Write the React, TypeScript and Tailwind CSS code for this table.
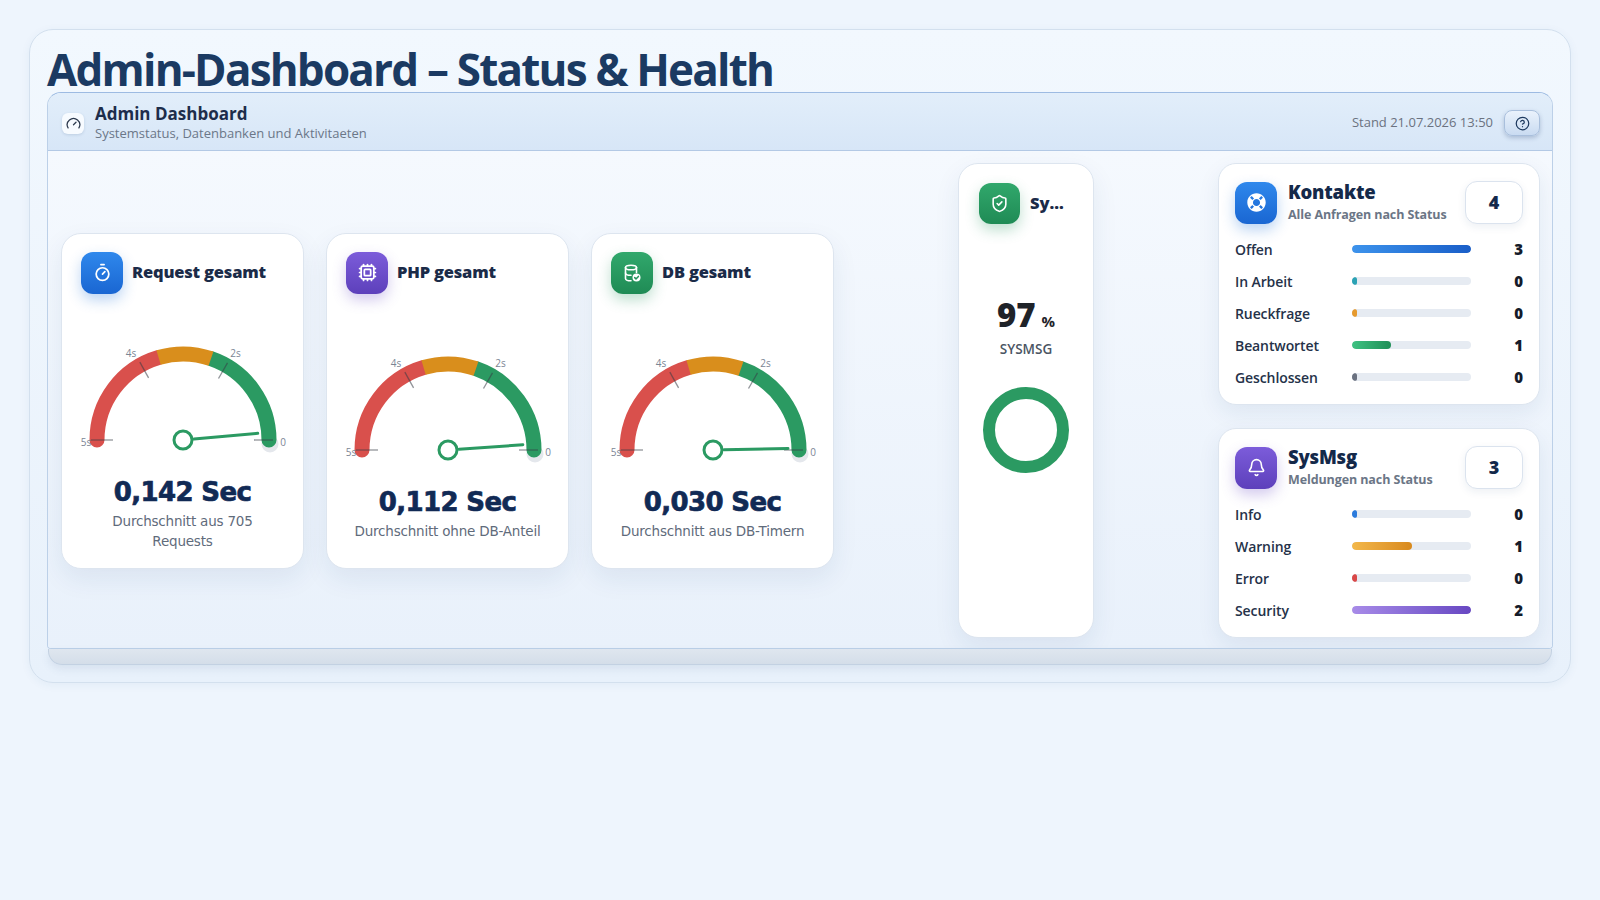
import { Timer, Cpu, ShieldCheck, Bell, Gauge as GaugeIcon } from 'lucide-react';
import { FaLifeRing } from 'react-icons/fa';

const CX = 110;
const CY = 100;
const R = 86;

function pt(r: number, deg: number) {
  const a = (deg * Math.PI) / 180;
  return [CX + r * Math.cos(a), CY - r * Math.sin(a)];
}

function arc(from: number, to: number) {
  const [x1, y1] = pt(R, from);
  const [x2, y2] = pt(R, to);
  return `M ${x1} ${y1} A ${R} ${R} 0 0 1 ${x2} ${y2}`;
}

function Tick({ deg, r1, r2 }: { deg: number; r1: number; r2: number }) {
  const [x1, y1] = pt(r1, deg);
  const [x2, y2] = pt(r2, deg);
  return <line x1={x1} y1={y1} x2={x2} y2={y2} stroke="rgba(55,60,70,0.55)" strokeWidth="1.3" />;
}

function Label({ deg, r, text }: { deg: number; r: number; text: string }) {
  const [x, y] = pt(r, deg);
  return (
    <text x={x} y={y} textAnchor="middle" dominantBaseline="central" fontSize="10" fill="#7b8594" fontFamily="'Open Sans', sans-serif">
      {text}
    </text>
  );
}

function Gauge({ value }: { value: number }) {
  const deg = 180 * (value / 5);
  const [nx1, ny1] = pt(11, deg);
  const [nx2, ny2] = pt(75, deg);
  const [ex, ey] = pt(R, 0);
  return (
    <svg width="220" height="114" viewBox="0 0 220 114">
      <circle cx={ex + 1} cy={ey + 4} r="8.5" fill="#e4e7ec" />
      <path d={arc(180, 106.5)} stroke="#d9504c" strokeWidth="15" fill="none" strokeLinecap="round" />
      <path d={arc(71, 0)} stroke="#2b9a62" strokeWidth="15" fill="none" strokeLinecap="round" />
      <path d={arc(106.5, 71)} stroke="#d98e1c" strokeWidth="15" fill="none" />
      <Tick deg={180} r1={70} r2={92} />
      <Tick deg={119} r1={71} r2={89} />
      <Tick deg={60} r1={71} r2={89} />
      <Tick deg={0} r1={71} r2={90} />
      <text x={CX - 97} y={CY + 2} textAnchor="middle" dominantBaseline="central" fontSize="10" fill="#7b8594" fontFamily="'Open Sans', sans-serif">5s</text>
      <text x={CX + 100} y={CY + 2} textAnchor="middle" dominantBaseline="central" fontSize="10" fill="#7b8594" fontFamily="'Open Sans', sans-serif">0</text>
      <Label deg={121} r={101} text="4s" />
      <Label deg={59} r={102} text="2s" />
      <line x1={nx1} y1={ny1} x2={nx2} y2={ny2} stroke="#2b9a62" strokeWidth="3" strokeLinecap="round" />
      <circle cx={CX} cy={CY} r="9" fill="#fff" stroke="#2b9a62" strokeWidth="3" />
    </svg>
  );
}

function DbIcon() {
  return (
    <svg width="20" height="20" viewBox="0 0 20 20" fill="none" stroke="#fff" strokeWidth="1.6" strokeLinecap="round" strokeLinejoin="round">
      <ellipse cx="9" cy="4.5" rx="5.5" ry="2.3" />
      <path d="M3.5 4.5v11c0 1.3 2.5 2.3 5.5 2.3" />
      <path d="M14.5 4.5v5" />
      <path d="M3.5 10c0 1.3 2.5 2.3 5.5 2.3" />
      <circle cx="14.5" cy="14.5" r="4" fill="#fff" stroke="none" />
      <path d="M12.7 14.6l1.3 1.3 2.4-2.5" stroke="#23945a" strokeWidth="1.5" />
    </svg>
  );
}

function HelpIcon() {
  return (
    <svg width="15" height="15" viewBox="0 0 24 24" fill="none" stroke="#1e3a5f" strokeWidth="2" strokeLinecap="round" strokeLinejoin="round">
      <circle cx="12" cy="12" r="10" />
      <path d="M9.09 9a3 3 0 0 1 5.83 1c0 2-3 3-3 3" />
      <path d="M12 17h.01" />
    </svg>
  );
}

const gauges = [
  { title: 'Request gesamt', value: 0.142, text: '0,142 Sec', sub: 'Durchschnitt aus 705 Requests', tone: 'blue', icon: <Timer className="w-[19px] h-[19px]" strokeWidth={2.2} /> },
  { title: 'PHP gesamt', value: 0.112, text: '0,112 Sec', sub: 'Durchschnitt ohne DB-Anteil', tone: 'purple', icon: <Cpu className="w-[19px] h-[19px]" strokeWidth={2.2} /> },
  { title: 'DB gesamt', value: 0.03, text: '0,030 Sec', sub: 'Durchschnitt aus DB-Timern', tone: 'green', icon: <DbIcon /> },
];

const toneClass: Record<string, string> = {
  blue: 'bg-gradient-to-b from-[#2f88ec] to-[#1a66d2] shadow-[0_6px_14px_rgba(31,111,216,0.30)]',
  purple: 'bg-gradient-to-b from-[#7c5cda] to-[#5d40bb] shadow-[0_6px_14px_rgba(110,80,200,0.30)]',
  green: 'bg-gradient-to-b from-[#31a86c] to-[#1f8b55] shadow-[0_6px_14px_rgba(40,150,95,0.30)]',
};

const kontakte = [
  { label: 'Offen', value: 3, pct: 100, bar: 'bg-gradient-to-r from-[#3d93ec] to-[#1a5ec8]' },
  { label: 'In Arbeit', value: 0, pct: 0, bar: 'bg-[#2ba2b4]' },
  { label: 'Rueckfrage', value: 0, pct: 0, bar: 'bg-[#e69a2e]' },
  { label: 'Beantwortet', value: 1, pct: 33, bar: 'bg-gradient-to-r from-[#3fc282] to-[#1f8f57]' },
  { label: 'Geschlossen', value: 0, pct: 0, bar: 'bg-[#6b7280]' },
];

const sysmsg = [
  { label: 'Info', value: 0, pct: 0, bar: 'bg-[#2b7bdc]' },
  { label: 'Warning', value: 1, pct: 50, bar: 'bg-gradient-to-r from-[#f3b84a] to-[#d8891c]' },
  { label: 'Error', value: 0, pct: 0, bar: 'bg-[#d94848]' },
  { label: 'Security', value: 2, pct: 100, bar: 'bg-gradient-to-r from-[#a88be8] to-[#6847c2]' },
];

type Row = { label: string; value: number; pct: number; bar: string };

function StatCard({ title, sub, count, tone, icon, rows }: { title: string; sub: string; count: number; tone: string; icon: React.ReactNode; rows: Row[] }) {
  return (
    <div className="rounded-[18px] border border-[#dde5ef] bg-white px-[16px] pt-[17px] pb-[17px] shadow-[0_8px_22px_rgba(30,60,110,0.08)]">
      <div className="flex items-center h-[43px]">
        <div className={`w-[42px] h-[42px] rounded-[12px] flex items-center justify-center text-white ${toneClass[tone]}`}>{icon}</div>
        <div className="ml-[11px]">
          <p className="text-[18.5px] font-extrabold leading-[22px] text-[#14294a] tracking-[-0.2px]">{title}</p>
          <p className="mt-[3px] text-[12.5px] font-bold leading-[18px] text-[#6b7686] tracking-[-0.1px]">{sub}</p>
        </div>
        <div className="ml-auto w-[58px] h-[43px] rounded-[12px] border border-[#dbe3ee] bg-white shadow-[0_3px_8px_rgba(30,60,110,0.08)] flex items-center justify-center text-[18px] font-extrabold text-[#13294b]">{count}</div>
      </div>
      <div className="mt-[15px] flex flex-col gap-[12px]">
        {rows.map(r => (
          <div key={r.label} className="h-[20px] flex items-center">
            <span className="w-[117px] text-[14px] font-semibold text-[#253249] tracking-[-0.1px]">{r.label}</span>
            <div className="w-[119px] h-[8px] rounded-full bg-[#e6ebf2] overflow-hidden">
              <div className={`h-full rounded-full ${r.bar}`} style={{ width: r.pct ? `${r.pct}%` : '5px' }} />
            </div>
            <span className="flex-1 text-right text-[15px] font-extrabold text-[#141b2a]">{r.value}</span>
          </div>
        ))}
      </div>
    </div>
  );
}

export default function App() {
  return (
    <div className="min-h-screen bg-[#eef5fd] p-[29px] font-['Open_Sans',sans-serif]">
      <div className="rounded-[24px] border border-[#d3e0ee] bg-gradient-to-b from-[#f2f8fe] to-[#e8f1fb] px-[17px] pt-[16px] pb-[17px] shadow-[0_2px_10px_rgba(40,80,140,0.06)]">
        <h1 className="text-[44px] leading-[46px] font-bold tracking-[-1.8px] text-[#1b3a62]">Admin-Dashboard – Status &amp; Health</h1>

        <div className="rounded-t-[14px] rounded-b-[4px] border border-[#bcd0e8] border-t-[#9dbbe2] overflow-hidden">
          <div className="h-[58px] flex items-center pl-[14px] pr-[12px] pt-[3px] bg-gradient-to-b from-[#e2eefa] to-[#d7e6f7] border-b border-[#b3c9e5]">
            <div className="w-[22px] h-[21px] rounded-[6px] bg-[#f7fbff] shadow-[0_1px_3px_rgba(30,60,110,0.15)] flex items-center justify-center text-[#2d3a4e]">
              <GaugeIcon className="w-[15px] h-[15px]" strokeWidth={2} />
            </div>
            <div className="ml-[11px]">
              <p className="text-[17px] font-bold leading-[20px] text-[#1d2d4b]">Admin Dashboard</p>
              <p className="text-[13px] leading-[18px] text-[#6b7788]">Systemstatus, Datenbanken und Aktivitaeten</p>
            </div>
            <span className="ml-auto text-[13px] text-[#6b7280]">Stand 21.07.2026 13:50</span>
            <button className="ml-[11px] w-[36px] h-[26px] rounded-[8px] border border-[#a9bfdc] bg-gradient-to-b from-[#eaf2fc] to-[#c9dbf1] shadow-[0_2px_4px_rgba(30,60,110,0.25)] flex items-center justify-center">
              <HelpIcon />
            </button>
          </div>

          <div className="flex items-center pl-[13px] pr-[12px] pt-[12px] pb-[10px] bg-gradient-to-b from-[#f5f9fe] to-[#e9f1fb]">
            <div className="flex gap-[22px]">
              {gauges.map(g => (
                <div key={g.title} className="w-[243px] h-[336px] flex flex-col rounded-[20px] border border-[#dde5ef] bg-white px-[19px] pt-[18px] shadow-[0_10px_26px_rgba(30,60,110,0.08)]">
                  <div className="flex items-center">
                    <div className={`w-[42px] h-[42px] rounded-[12px] flex items-center justify-center text-white ${toneClass[g.tone]}`}>{g.icon}</div>
                    <span className="ml-[9px] text-[16.5px] font-extrabold text-[#1b2b48] tracking-[-0.2px]">{g.title}</span>
                  </div>
                  <div className="flex-1 flex flex-col items-center justify-center pt-[30px]">
                    <Gauge value={g.value} />
                    <p className="mt-[22px] text-[26px] leading-[32px] font-bold tracking-[-0.6px] text-[#112a55] font-['DejaVu_Sans',sans-serif] [-webkit-text-stroke:0.7px_#112a55]">{g.text}</p>
                    <p className="mt-[3px] text-[13.5px] leading-[20px] text-center text-[#5f6b7b] font-['DejaVu_Sans',sans-serif] tracking-[-0.2px]">{g.sub}</p>
                  </div>
                </div>
              ))}
            </div>

            <div className="flex-1 self-stretch flex justify-center">
              <div className="w-[136px] h-full rounded-[20px] border border-[#dde5ef] bg-white px-[20px] pt-[19px] shadow-[0_10px_26px_rgba(30,60,110,0.08)] flex flex-col">
                <div className="flex items-center">
                  <div className={`w-[41px] h-[41px] rounded-[12px] flex items-center justify-center text-white ${toneClass.green}`}>
                    <ShieldCheck className="w-[19px] h-[19px]" strokeWidth={2} />
                  </div>
                  <span className="ml-[10px] text-[16.5px] font-extrabold text-[#1b2b48]">Sy...</span>
                </div>
                <div className="mt-[74px] flex items-baseline justify-center">
                  <span className="text-[33px] leading-[33px] font-extrabold text-[#1f2329]">97</span>
                  <span className="ml-[6px] text-[15px] font-bold text-[#1f2329]">%</span>
                </div>
                <p className="mt-[8px] text-center text-[13.5px] leading-[16px] font-semibold text-[#4b5563]">SYSMSG</p>
                <div className="mt-[29px] flex justify-center">
                  <svg width="88" height="88" viewBox="0 0 88 88">
                    <circle cx="44" cy="44" r="37" fill="none" stroke="#2b9a62" strokeWidth="12" />
                  </svg>
                </div>
              </div>
            </div>

            <div className="w-[322px] flex flex-col gap-[23px]">
              <StatCard title="Kontakte" sub="Alle Anfragen nach Status" count={4} tone="blue" icon={<FaLifeRing className="w-[19px] h-[19px]" />} rows={kontakte} />
              <StatCard title="SysMsg" sub="Meldungen nach Status" count={3} tone="purple" icon={<Bell className="w-[19px] h-[19px]" strokeWidth={2} />} rows={sysmsg} />
            </div>
          </div>
        </div>
        <div className="h-[16px] mx-[1px] rounded-b-[14px] bg-gradient-to-b from-[#dfe6ef] to-[#d4dee9] border border-t-0 border-[#c3d1e2] shadow-[0_4px_8px_rgba(60,90,130,0.10)]" />
      </div>
    </div>
  );
}
